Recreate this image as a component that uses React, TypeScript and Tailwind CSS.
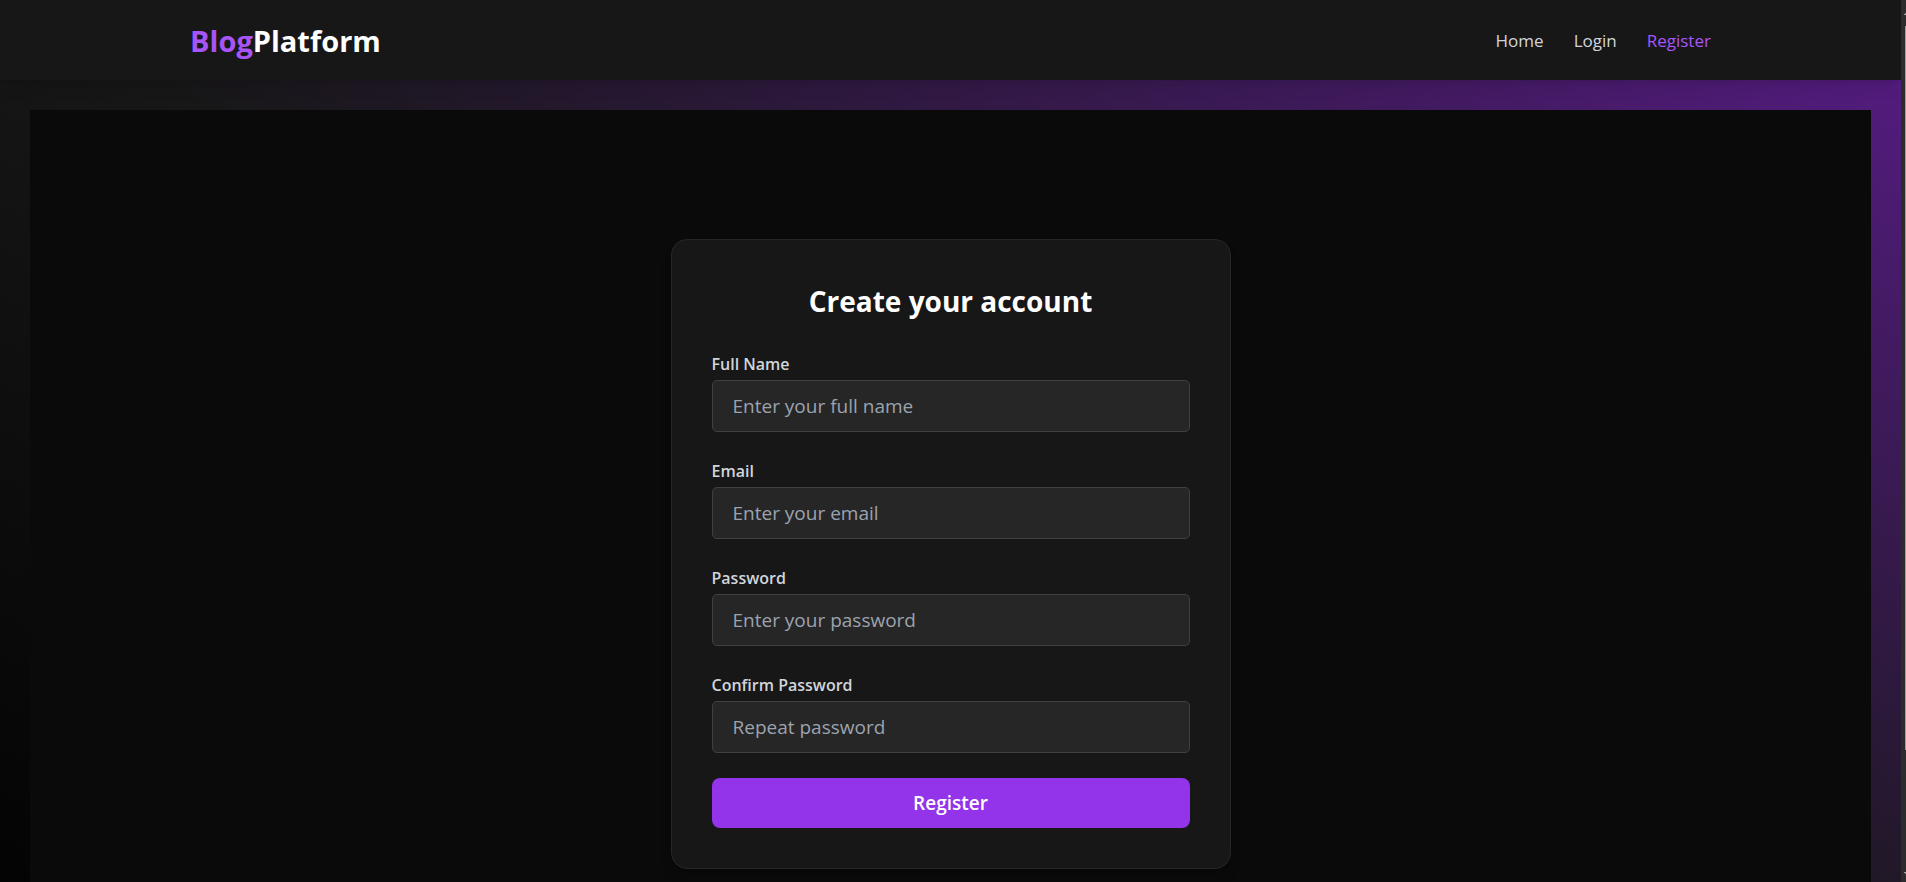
const fields = [
  { id: "name", label: "Full Name", type: "text", placeholder: "Enter your full name" },
  { id: "email", label: "Email", type: "email", placeholder: "Enter your email" },
  { id: "password", label: "Password", type: "password", placeholder: "Enter your password" },
  { id: "confirm", label: "Confirm Password", type: "password", placeholder: "Repeat password" },
];

function Navbar() {
  return (
    <header className="relative flex h-20 items-center justify-between bg-[#171717] px-[10%] pt-0.5 shadow-lg">
      <a href="#home" className="text-[29px] leading-10 font-bold text-white">
        <span className="text-[#a855f7]">Blog</span>Platform
      </a>
      <nav className="flex gap-[30px] text-[17px] leading-6 text-[#d1d5db]">
        <a href="#home">Home</a>
        <a href="#login">Login</a>
        <a href="#register" className="text-[#a855f7]">Register</a>
      </nav>
    </header>
  );
}

function RegisterForm() {
  return (
    <form className="w-full max-w-[560px] rounded-2xl border border-[#262626] bg-[#171717] p-10 shadow-lg">
      <h1 className="mb-7 text-center text-[28px] leading-[42px] font-bold text-white">Create your account</h1>
      {fields.map((f) => (
        <div key={f.id} className="mb-[25px]">
          <label htmlFor={f.id} className="mb-0.5 block text-base leading-7 font-semibold text-[#d1d5db]">
            {f.label}
          </label>
          <input
            id={f.id}
            type={f.type}
            placeholder={f.placeholder}
            className="block h-[52px] w-full rounded-[5px] border border-[#404040] bg-[#262626] px-5 text-[19px] text-white outline-none placeholder:text-[#9ca3af]"
          />
        </div>
      ))}
      <button type="submit" className="block h-[50px] w-full rounded-lg bg-[#9333ea] text-[19px] font-semibold text-white">
        Register
      </button>
    </form>
  );
}

function ScrollTrack() {
  return (
    <div aria-hidden="true" className="flex w-[5px] shrink-0 flex-col items-end bg-[#2c2c2c] pt-3 pb-2">
      <svg className="h-3.5 w-0.5 shrink-0" viewBox="0 0 2 14" fill="#9f9f9f" shapeRendering="crispEdges">
        <path d="M1 1h1v2H0V2h1z" />
      </svg>
      <div className="h-[84%] w-px bg-[#9f9f9f]" />
      <svg className="mt-auto h-0.5 w-0.5 shrink-0" viewBox="0 0 2 2" fill="#9f9f9f" shapeRendering="crispEdges">
        <path d="M0 0h2v2H1V1H0z" />
      </svg>
    </div>
  );
}

export default function App() {
  return (
    <div className="flex h-screen bg-[#0a0a0a] font-['Open_Sans','Noto_Sans',sans-serif]">
      <div className="min-w-0 flex-1 overflow-y-auto [scrollbar-width:none]">
        <div className="bg-[linear-gradient(to_top_right,#000000,#171717,#581c87)]">
          <Navbar />
          <main className="p-[30px]">
            <section className="flex justify-center bg-[#0a0a0a] pt-[129px] pb-[142px]">
              <RegisterForm />
            </section>
          </main>
        </div>
      </div>
      <ScrollTrack />
    </div>
  );
}
